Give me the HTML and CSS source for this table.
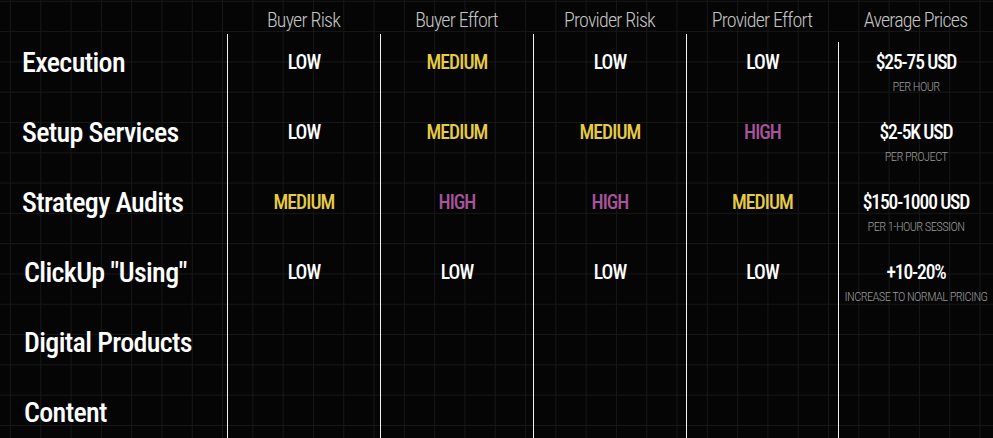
FILE: index.html
```html
<!DOCTYPE html>
<html lang="en">
<head>
<meta charset="utf-8">
<title>Service pricing matrix</title>
<link rel="stylesheet" href="styles.css">
</head>
<body>
<main class="matrix">
  <section class="col col--labels">
    <div class="col-head"></div>
    <div class="col-body">
      <div class="label">Execution</div>
      <div class="label">Setup Services</div>
      <div class="label">Strategy Audits</div>
      <div class="label label--inset">ClickUp "Using"</div>
      <div class="label label--inset">Digital Products</div>
      <div class="label label--inset">Content</div>
    </div>
  </section>

  <section class="col">
    <div class="col-head">Buyer Risk</div>
    <div class="col-body">
      <div class="cell">LOW</div>
      <div class="cell">LOW</div>
      <div class="cell cell--medium">MEDIUM</div>
      <div class="cell">LOW</div>
      <div class="cell"></div>
      <div class="cell"></div>
    </div>
  </section>

  <section class="col">
    <div class="col-head">Buyer Effort</div>
    <div class="col-body">
      <div class="cell cell--medium">MEDIUM</div>
      <div class="cell cell--medium">MEDIUM</div>
      <div class="cell cell--high">HIGH</div>
      <div class="cell">LOW</div>
      <div class="cell"></div>
      <div class="cell"></div>
    </div>
  </section>

  <section class="col">
    <div class="col-head">Provider Risk</div>
    <div class="col-body">
      <div class="cell">LOW</div>
      <div class="cell cell--medium">MEDIUM</div>
      <div class="cell cell--high">HIGH</div>
      <div class="cell">LOW</div>
      <div class="cell"></div>
      <div class="cell"></div>
    </div>
  </section>

  <section class="col">
    <div class="col-head">Provider Effort</div>
    <div class="col-body">
      <div class="cell">LOW</div>
      <div class="cell cell--high">HIGH</div>
      <div class="cell cell--medium">MEDIUM</div>
      <div class="cell">LOW</div>
      <div class="cell"></div>
      <div class="cell"></div>
    </div>
  </section>

  <section class="col col--price">
    <div class="col-head">Average Prices</div>
    <div class="col-body">
      <div class="cell cell--price"><span class="price">$25-75 USD</span><span class="unit">PER HOUR</span></div>
      <div class="cell cell--price"><span class="price">$2-5K USD</span><span class="unit">PER PROJECT</span></div>
      <div class="cell cell--price"><span class="price">$150-1000 USD</span><span class="unit">PER 1-HOUR SESSION</span></div>
      <div class="cell cell--price"><span class="price">+10-20%</span><span class="unit">INCREASE TO NORMAL PRICING</span></div>
      <div class="cell"></div>
      <div class="cell"></div>
    </div>
  </section>
</main>
</body>
</html>
```
FILE: styles.css
```css
html, body {
  margin: 0;
  padding: 0;
}

body {
  width: 993px;
  height: 438px;
  overflow: hidden;
  background-color: #050505;
  background-image:
    linear-gradient(to right, #171717 1px, transparent 1px),
    linear-gradient(to bottom, #171717 1px, transparent 1px);
  background-size: 30.3px 30.3px;
  background-position: 10px 0.8px;
  font-family: Roboto, "Roboto Condensed", sans-serif;
  font-stretch: 75%;
  color: #ffffff;
}

.matrix {
  display: grid;
  grid-template-columns: 227px 153px 153px 153px 152px 1fr;
  height: 438px;
}

.col {
  display: flex;
  flex-direction: column;
  min-width: 0;
}

.col-head {
  height: 34px;
  box-sizing: border-box;
  padding-top: 10px;
  text-align: center;
  font-size: 20px;
  line-height: 20px;
  font-weight: 300;
  letter-spacing: -0.8px;
  color: #c4c4c4;
  white-space: nowrap;
}

.col-body {
  flex: 1;
  display: flex;
  flex-direction: column;
  border-left: 1px solid #f2f2f2;
}

.col--labels .col-body {
  border-left: none;
}

.col--price .col-body {
  margin-top: 8px;
}

.col--price .cell:first-child {
  margin-top: -8px;
}

.label {
  height: 70px;
  flex: none;
  box-sizing: border-box;
  padding: 15px 0 0 22px;
  font-size: 28px;
  line-height: 28px;
  font-weight: 500;
  letter-spacing: -0.65px;
  white-space: nowrap;
}

.label--inset {
  padding-left: 24px;
}

.cell {
  height: 70px;
  flex: none;
  box-sizing: border-box;
  padding-top: 19px;
  display: flex;
  flex-direction: column;
  align-items: center;
  font-size: 19.5px;
  line-height: 20px;
  font-weight: 500;
  letter-spacing: -0.9px;
  color: #ffffff;
  white-space: nowrap;
}

.cell--medium {
  color: #e6cb45;
}

.cell--high {
  color: #a8539b;
}

.price {
  font-weight: 500;
  font-size: 19.5px;
  line-height: 20px;
  letter-spacing: -1.1px;
}

.unit {
  margin-top: 7px;
  font-size: 12.5px;
  line-height: 13px;
  font-weight: 300;
  letter-spacing: -0.6px;
  color: #9a9a9a;
}
```
